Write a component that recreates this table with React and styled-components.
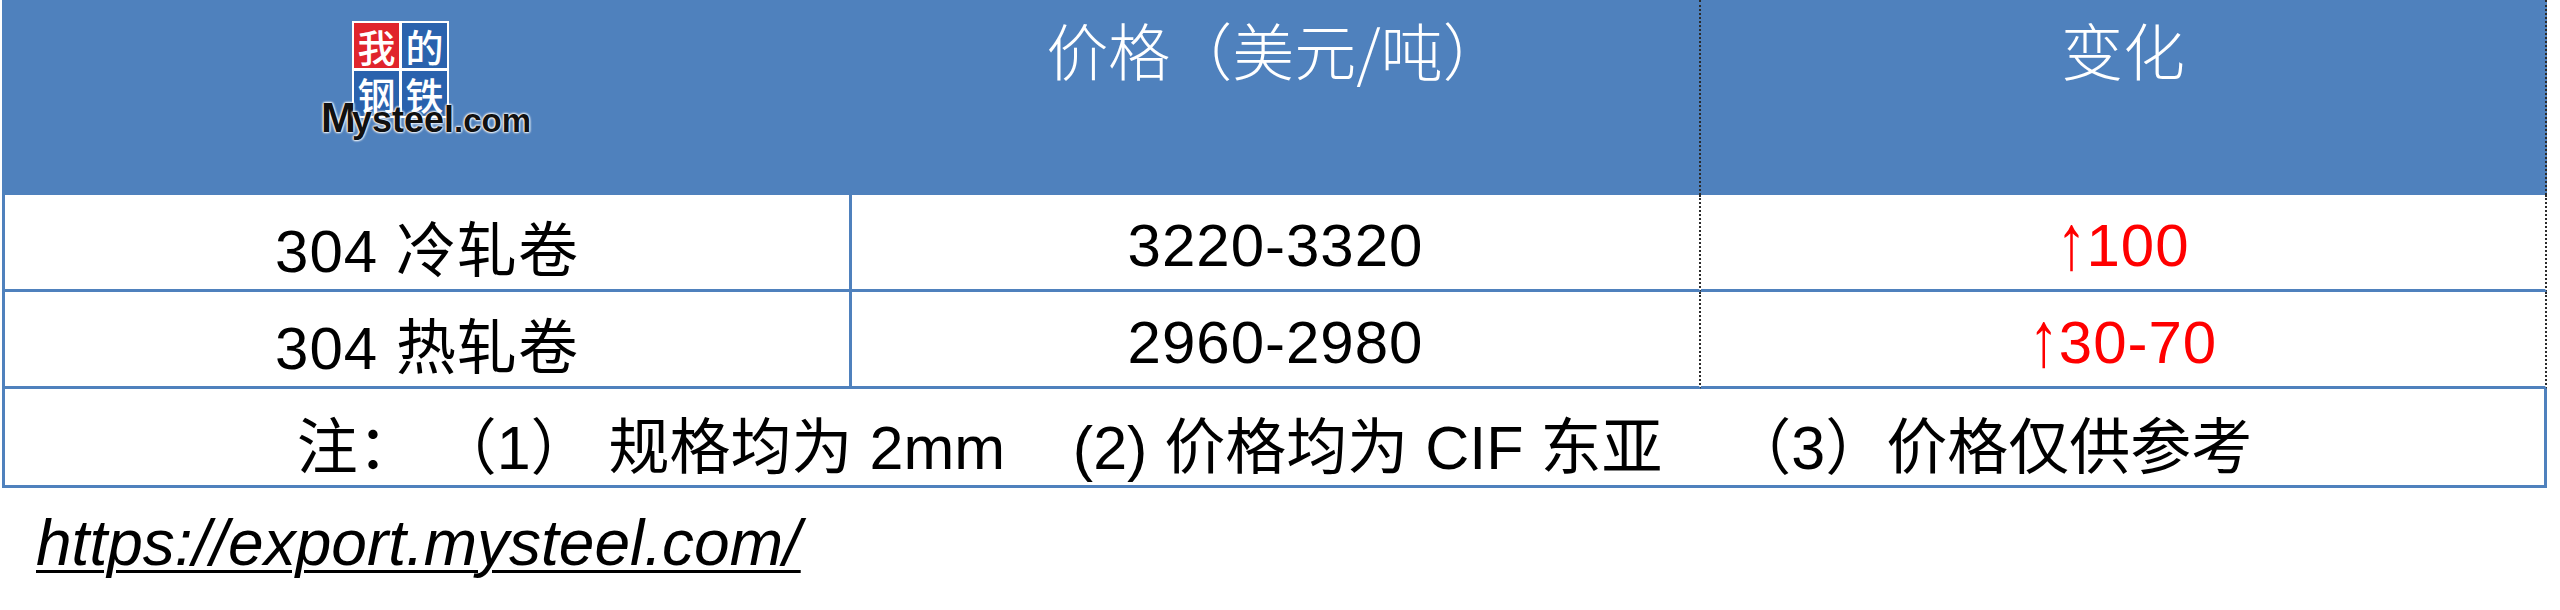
import React from 'react';
import styled, { createGlobalStyle } from 'styled-components';

const GlobalStyle = createGlobalStyle`
  body {
    margin: 0;
    background: #ffffff;
    font-family: "Liberation Sans", "Noto Sans CJK SC", sans-serif;
  }
`;

const Page = styled.div`
  width: 2560px;
  height: 610px;
  overflow: hidden;
  padding-left: 2px;
  box-sizing: border-box;
`;

const Table = styled.div`
  display: grid;
  grid-template-columns: 847px 849px 846px;
  grid-template-rows: 195px 97px 97px 99px;
  width: 2545px;
  border-left: 3px solid #4f81bd;
  box-sizing: border-box;
`;

const HeadCell = styled.div`
  background: #4f81bd;
  color: #ffffff;
  font-family: "Noto Sans CJK SC", "Liberation Sans", sans-serif;
  font-weight: 300;
  font-size: 62px;
  line-height: 1.2;
  display: flex;
  justify-content: center;
  align-items: flex-start;
  padding-top: ${({ $top }) => $top || 12}px;
  box-sizing: border-box;
  border-right: ${({ $dotted }) => ($dotted ? '2px dotted #2b2b2b' : '3px solid #4f81bd')};
`;

const Cell = styled.div`
  display: flex;
  justify-content: center;
  align-items: center;
  padding-top: 6px;
  box-sizing: border-box;
  font-size: 60px;
  letter-spacing: 1px;
  color: ${({ $red }) => ($red ? '#ff0000' : '#000000')};
  border-bottom: 3px solid #4f81bd;
  border-right: ${({ $dotted }) => ($dotted ? '2px dotted #2b2b2b' : '3px solid #4f81bd')};
`;

const Arrow = styled.span`
  display: inline-block;
  transform: scaleY(1.3) translateY(2px);
  transform-origin: 50% 80%;
  letter-spacing: 0;
`;

const NoteCell = styled.div`
  grid-column: 1 / -1;
  display: flex;
  justify-content: center;
  align-items: center;
  padding-top: 10px;
  box-sizing: border-box;
  font-size: 61px;
  white-space: pre;
  color: #000000;
  border-bottom: 3px solid #4f81bd;
  border-right: 3px solid #4f81bd;
`;

const Logo = styled.div`
  width: 212px;
  display: flex;
  flex-direction: column;
  align-items: flex-start;
`;

const LogoGrid = styled.div`
  margin-left: 31px;
  display: grid;
  grid-template-columns: 45px 45px;
  grid-template-rows: 45px 45px;
  gap: 3px;
  padding: 2px;
  background: #ffffff;
`;

const LogoChar = styled.div`
  background: ${({ $red }) => ($red ? '#e0242c' : '#2a62ad')};
  color: #ffffff;
  font-family: "Noto Sans CJK SC", sans-serif;
  font-weight: 500;
  font-size: 38px;
  line-height: 45px;
  text-align: center;
`;

const LogoText = styled.div`
  margin-top: -21px;
  font-family: "Liberation Sans", sans-serif;
  font-weight: 700;
  font-size: 42px;
  color: #111111;
  line-height: 1;
  white-space: nowrap;
  text-shadow: 0 0 2px #fff, 0 0 2px #fff, 0 0 3px #fff, 0 0 3px #fff;
`;

const LogoPart = styled.span`
  font-size: ${({ $size }) => $size}px;
  letter-spacing: ${({ $spacing }) => $spacing || 0}px;
`;

const Link = styled.a`
  display: block;
  margin: 19px 0 0 34px;
  font-family: "Liberation Sans", sans-serif;
  font-style: italic;
  font-size: 64px;
  line-height: 72px;
  color: #000000;
  text-decoration: underline;
  text-decoration-thickness: 3px;
  text-underline-offset: 5px;
`;

const rows = [
  { name: '304 冷轧卷', price: '3220-3320', change: '100' },
  { name: '304 热轧卷', price: '2960-2980', change: '30-70' },
];

const App = () => (
  <Page>
    <GlobalStyle />
    <Table>
      <HeadCell $top={21}>
        <Logo>
          <LogoGrid>
            <LogoChar $red>我</LogoChar>
            <LogoChar>的</LogoChar>
            <LogoChar>钢</LogoChar>
            <LogoChar>铁</LogoChar>
          </LogoGrid>
          <LogoText>
            <LogoPart $size={42} $spacing={-4}>M</LogoPart>
            <LogoPart $size={36}>ysteel</LogoPart>
            <LogoPart $size={33}>.com</LogoPart>
          </LogoText>
        </Logo>
      </HeadCell>
      <HeadCell $dotted>价格（美元/吨）</HeadCell>
      <HeadCell $dotted>变化</HeadCell>

      {rows.map((row) => (
        <React.Fragment key={row.name}>
          <Cell>{row.name}</Cell>
          <Cell $dotted>{row.price}</Cell>
          <Cell $dotted $red>
            <Arrow>↑</Arrow>
            {row.change}
          </Cell>
        </React.Fragment>
      ))}

      <NoteCell>{'注： （1） 规格均为 2mm    (2) 价格均为 CIF 东亚    （3）价格仅供参考'}</NoteCell>
    </Table>
    <Link href="https://export.mysteel.com/">https://export.mysteel.com/</Link>
  </Page>
);

export default App;
